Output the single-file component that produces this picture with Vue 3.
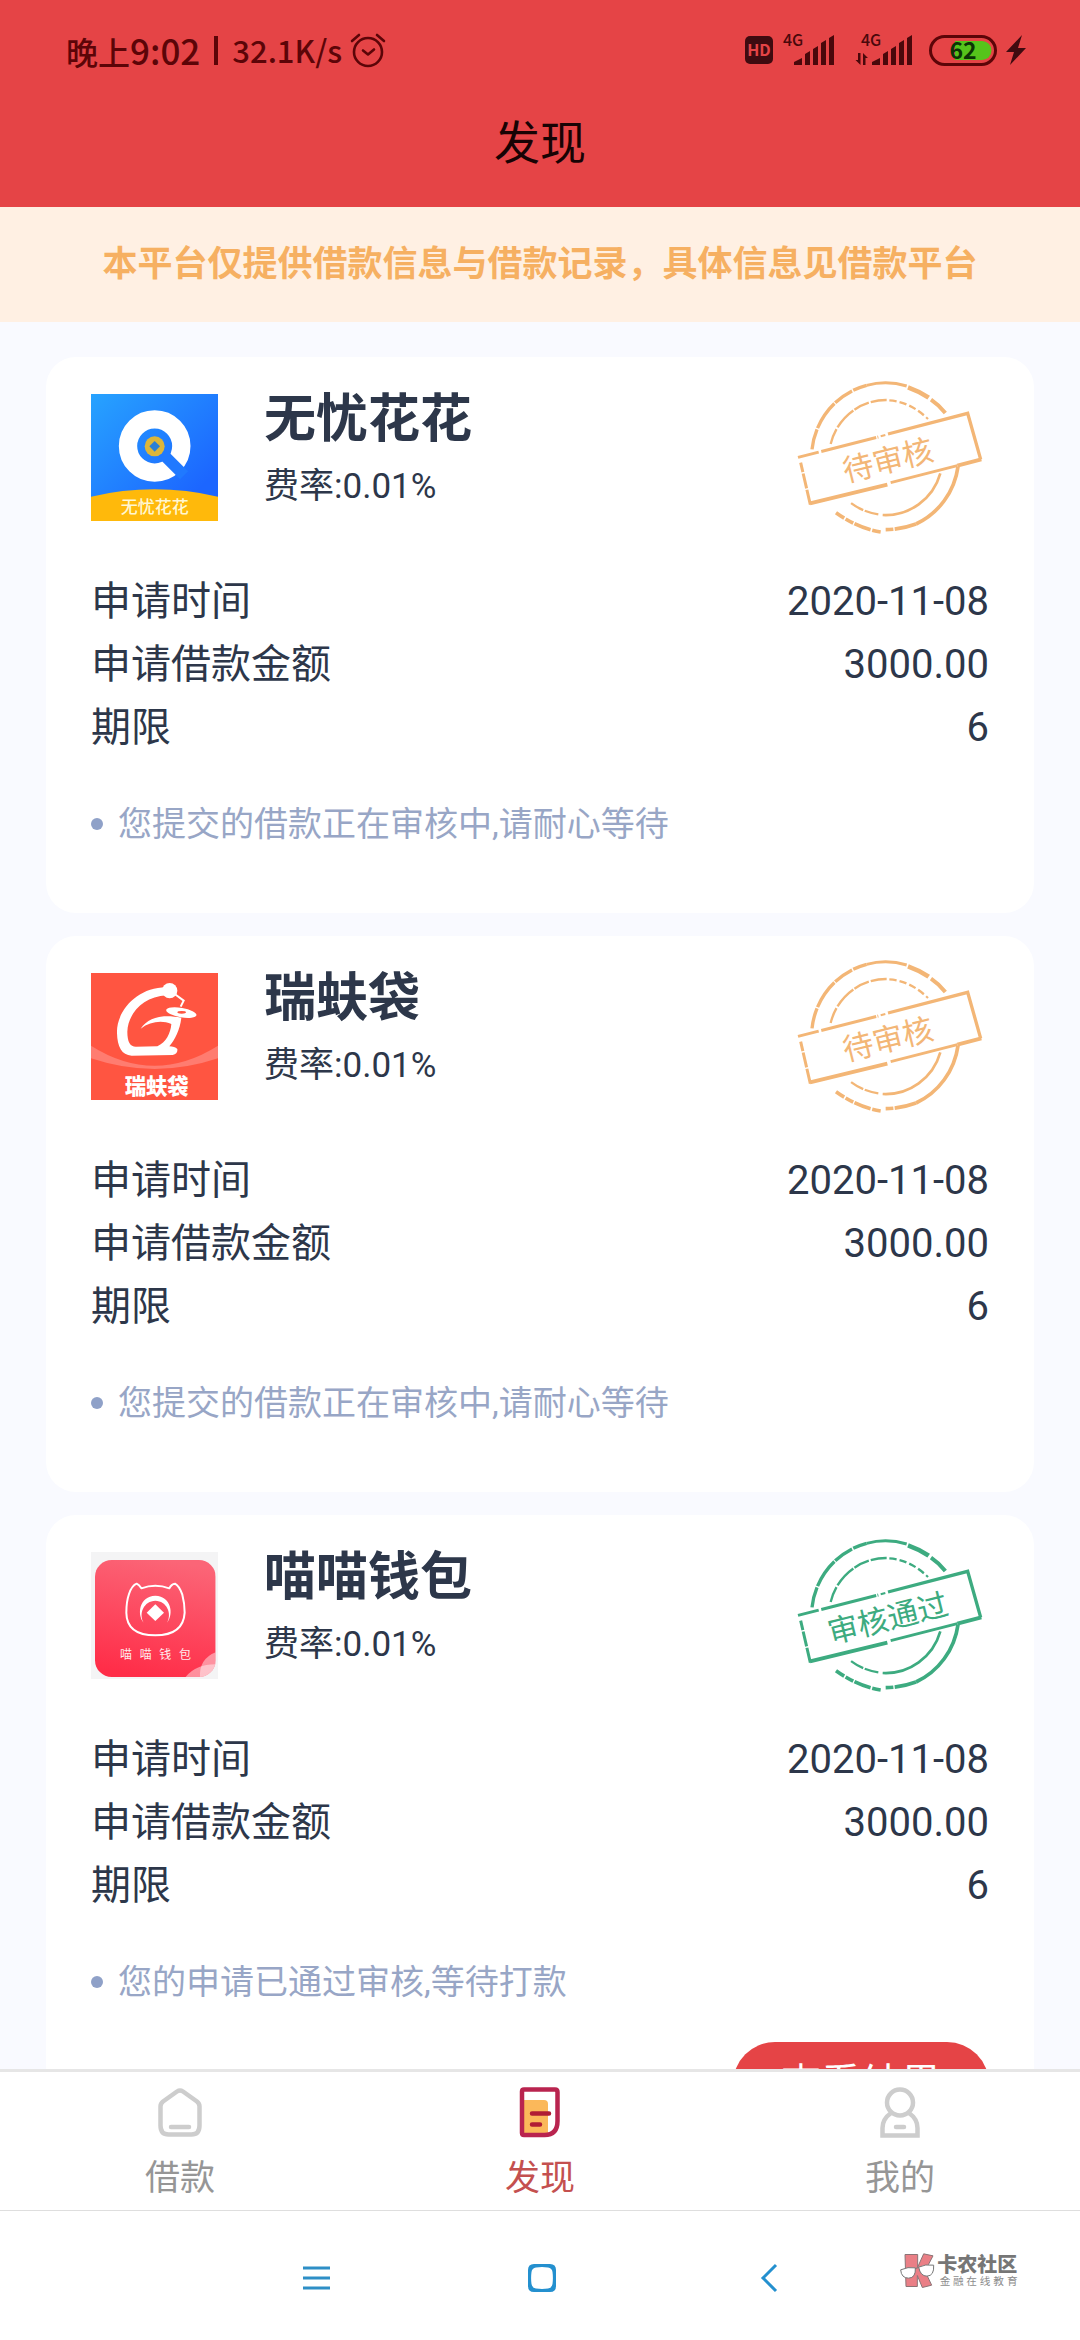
<template>
  <div class="page">
    <header class="header">
      <div class="status">
        <span class="clock">晚上<b>9:02</b></span>
        <span class="divider"></span>
        <span class="speed">32.1K/s</span>
        <svg class="alarm" width="36" height="36" viewBox="0 0 36 36" fill="none" stroke="#5c0508" stroke-width="2.6" stroke-linecap="round" stroke-linejoin="round">
          <circle cx="18" cy="20" r="14" />
          <path d="M13 18.5l5 4 6-5M2 9l7-6M34 9l-7-6" />
        </svg>
        <div class="status-right">
          <svg width="28" height="30" viewBox="0 0 28 30">
            <rect y="1" width="28" height="28" rx="5" fill="#3f0b10" />
            <text x="14" y="21" text-anchor="middle" font-size="16" font-weight="700" fill="#e54446">HD</text>
          </svg>
          <svg v-for="sim in sims" :key="sim.id" class="signal" width="58" height="32" viewBox="0 0 58 32" fill="#4a080b">
            <text x="6" y="12" font-size="16" font-weight="500">4G</text>
            <path d="M17 31v-3l8-4v7zM28 31V20l5-3v14zM36 31V15l5-3v19zM44 31V9l5-3v25zM52 31V4l5-3v30z" />
            <path v-if="sim.active" d="M3 19h2.500v12l-5-5h2.500zM8 31h2.500V24h2.500l-5-5z" />
          </svg>
          <svg class="battery" width="68" height="32" viewBox="0 0 68 32">
            <rect x="1.500" y="2.500" width="65" height="28" rx="14" fill="none" stroke="#5c0508" stroke-width="3" />
            <path d="M26 7h27a9.500 9.500 0 0 1 0 19H26z" fill="#56c41b" />
            <text x="34" y="25" text-anchor="middle" font-size="23" font-weight="600" fill="#0c3305">62</text>
          </svg>
          <svg class="bolt" width="20" height="32" viewBox="0 0 20 32">
            <path d="M16 1L0 18h8L4 31l16-17h-8z" fill="#3f0b10" />
          </svg>
        </div>
      </div>
      <h1 class="title">发现</h1>
    </header>

    <p class="notice">本平台仅提供借款信息与借款记录，具体信息见借款平台</p>

    <main class="list">
      <article v-for="item in loans" :key="item.name" class="card">
        <div class="card-head">
          <svg v-if="item.logo === 'wuyou'" class="logo" viewBox="153 132 381 381">
            <defs>
              <linearGradient id="blue" x1="0" y1="0" x2="1" y2="1">
                <stop offset="0" stop-color="#27a3ff" />
                <stop offset="0.8" stop-color="#1c66ff" />
              </linearGradient>
            </defs>
            <rect x="153" y="132" width="381" height="381" fill="url(#blue)" />
            <circle cx="344" cy="288" r="80" fill="none" stroke="#fff" stroke-width="55" />
            <path d="M366 310l66 66" stroke="#2079ff" stroke-width="34" />
            <circle cx="344" cy="289" r="30" fill="#dcb63a" />
            <path d="M344 273l16 16-16 16-16-16z" fill="#2a7fd8" />
            <path d="M153 440q190-44 381 0v73H153z" fill="#ffb90b" />
            <text x="344" y="489" text-anchor="middle" font-size="51" font-weight="500" fill="#fff7d2">无忧花花</text>
          </svg>
          <svg v-else-if="item.logo === 'ruifu'" class="logo" viewBox="153 69 381 381">
            <rect x="153" y="69" width="381" height="381" fill="#ff5541" />
            <path d="M153 287q190 120 381 0v38q-190 64-381 0z" fill="#ff7c70" />
            <g fill="#fff">
              <path d="M378 112C290 112 228 185 231 250C232 290 245 316 275 317L398 315Q414 312 412 297Q404 289 388 289C404 270 420 240 424 203C370 192 325 200 302 236C330 215 365 210 394 222C392 250 378 277 352 289L288 290C270 290 262 275 262 245C264 190 310 140 380 136Z" />
              <circle cx="389" cy="122" r="23" />
              <ellipse cx="424" cy="188" rx="46" ry="14" transform="rotate(10 424 188)" />
            </g>
            <path d="M404 132l27 20-9 18" fill="none" stroke="#fff" stroke-width="6" />
            <ellipse cx="425" cy="187" rx="13" ry="4" fill="#ff5541" />
            <text x="350" y="431" text-anchor="middle" font-size="64" font-weight="900" fill="#fff">瑞蚨袋</text>
          </svg>
          <svg v-else class="logo" viewBox="153 66 381 381">
            <defs>
              <linearGradient id="pink" x1="0.600" y1="0" x2="0.400" y2="1">
                <stop offset="0" stop-color="#fb6577" />
                <stop offset="1" stop-color="#ff2d48" />
              </linearGradient>
              <clipPath id="tile">
                <rect x="165" y="90" width="362" height="351" rx="50" />
              </clipPath>
            </defs>
            <rect x="153" y="66" width="381" height="381" fill="#f4f4f5" />
            <g clip-path="url(#tile)">
              <rect x="165" y="90" width="362" height="351" fill="url(#pink)" />
              <path d="M437 441q30-38 90-38v38z" fill="#fff" opacity="0.450" />
              <path d="M527 367q-50 20-47 74h47z" fill="#fff" opacity="0.450" />
            </g>
            <path d="M290 161Q297 164 304 175Q346 160 388 175Q394 162 405 161Q418 168 427 194Q434 220 434 248Q430 316 346 316Q260 316 259 248Q259 215 267 192Q276 166 290 161Z" fill="none" stroke="#fff" stroke-width="6" stroke-linejoin="round" />
            <path d="M311 278C290 252 298 199 346 197C394 199 402 252 381 278C397 250 380 213 346 212C312 213 295 250 311 278Z" fill="#fff" />
            <path d="M346 223l26 25-26 25-26-25z" fill="#fff" />
            <text x="240 299 358 417" y="387" font-size="36" fill="#ffe9ec">喵喵钱包</text>
          </svg>
          <div class="intro">
            <h2>{{ item.name }}</h2>
            <p>费率:{{ item.rate }}</p>
          </div>
        </div>

        <svg class="stamp" :class="item.state" viewBox="72 48 588 480">
          <g fill="none" stroke="currentColor">
            <path d="M126 268A221 224 0 0 1 290 76" stroke-width="10" stroke-dasharray="62 4 90 3" />
            <path d="M290 76A221 224 0 0 1 410 78" stroke-width="9" />
            <path d="M414 82Q448 94 476 113" stroke-width="14" />
            <path d="M483 119Q508 136 526 159" stroke-width="12" />
            <path d="M564 320A221 224 0 0 1 438 492" stroke-width="11" />
            <path d="M438 492Q395 508 347 509" stroke-width="11" stroke-dasharray="66 4" />
            <path d="M332 516Q265 506 198 458" stroke-width="11" stroke-dasharray="26 5 52 4" />
            <path d="M182 252A171 173 0 0 1 350 120" stroke-width="7" stroke-dasharray="48 6 70 4" />
            <path d="M358 121Q420 125 474 177" stroke-width="7" stroke-dasharray="22 9" />
            <path d="M511 340A171 173 0 0 1 338 465" stroke-width="8" />
            <path d="M325 463Q275 455 240 427" stroke-width="7" stroke-dasharray="42 5" />
            <path d="M84 292L325 231" stroke-width="9" stroke-dasharray="64 8 170 4" />
            <path d="M332 229l14-4" stroke-width="6" />
            <path d="M354 222L593 160L632 298" stroke-width="10" />
            <path d="M634 298L562 317" stroke-width="12" />
            <path d="M562 317L362 368" stroke-width="8" />
            <path d="M352 374L120 430" stroke-width="12" />
            <path d="M121 434L92 308" stroke-width="9" stroke-dasharray="46 4" />
          </g>
          <text x="354" y="334" text-anchor="middle" font-size="92" transform="rotate(-14 354 302)">{{ item.stamp }}</text>
        </svg>

        <dl class="details">
          <div v-for="row in item.rows" :key="row.label">
            <dt>{{ row.label }}</dt>
            <dd>{{ row.value }}</dd>
          </div>
        </dl>
        <p class="message">{{ item.message }}</p>
        <button v-if="item.action" type="button" class="action">{{ item.action }}</button>
      </article>
    </main>

    <nav class="tabs">
      <a href="#loan">
        <svg width="52" height="52" viewBox="0 0 52 52" fill="none" stroke="#cdcdcd" stroke-width="4.500" stroke-linecap="round" stroke-linejoin="round">
          <path d="M23 4.500q3-2 6 0l14 10q2.500 2 2.500 5v19q0 9-8 9h-23q-8 0-8-9v-19q0-3 2.500-5z" />
          <path d="M17 40h18" />
        </svg>
        <span>借款</span>
      </a>
      <a href="#discover" class="active">
        <svg width="52" height="52" viewBox="0 0 52 52" fill="none" stroke-linecap="round" stroke-linejoin="round">
          <path d="M9 13h21q4 0 4 4v31H9z" fill="#fbb85a" />
          <path d="M10 2.500h31q2.500 0 2.500 2.500v29q0 14-13 14H10q-2 0-2-2v-41.500q0-2 2-2z" stroke="#b9244f" stroke-width="4.500" />
          <path d="M18 26.500h17M18 37.500h8" stroke="#b01c34" stroke-width="4.500" />
        </svg>
        <span>发现</span>
      </a>
      <a href="#mine">
        <svg width="52" height="52" viewBox="0 0 52 52" fill="none" stroke="#cdcdcd" stroke-width="4.500" stroke-linecap="round">
          <circle cx="26" cy="15.500" r="13" />
          <path d="M17 26q-8.500 6-8.500 15v7.500h35V41q0-9-8.500-15" />
          <path d="M22 40h8" />
        </svg>
        <span>我的</span>
      </a>
    </nav>

    <footer class="system">
      <button type="button" aria-label="menu">
        <svg width="30" height="30" viewBox="0 0 30 30" stroke="#2e8fc6" stroke-width="3">
          <path d="M2 5h27M2 15h27M2 25h27" />
        </svg>
      </button>
      <button type="button" aria-label="home">
        <svg width="30" height="30" viewBox="0 0 30 30">
          <path fill-rule="evenodd" d="M7 1h16q6 0 6 6v16q0 6-6 6H7q-6 0-6-6V7q0-6 6-6zM9 4.500q-4 .5-4.500 4.500-.8 6 0 12 .5 4 4.500 4.500 6 .8 12 0 4-.5 4.500-4.500.8-6 0-12-.5-4-4.500-4.500-6-.8-12 0z" fill="#2490cf" />
        </svg>
      </button>
      <button type="button" aria-label="back">
        <svg width="30" height="30" viewBox="0 0 30 30" fill="none" stroke="#2490cf" stroke-width="3">
          <path d="M23 2L10 15l13 13" />
        </svg>
      </button>
      <svg class="community" viewBox="720 815 354 110">
        <g fill="#ea7f86" stroke="#8b7476" stroke-width="3">
          <path d="M735 822h38v38l18-40 28 6-24 46 20 42-28 7-15-36v33h-34z" />
        </g>
        <g fill="#fff" stroke="#777" stroke-width="3">
          <path d="M722 868q22-10 44-6 2 30-20 31-22 0-24-25z" />
          <path d="M776 860q20-10 45-6 2 32-20 33-20 0-25-27z" />
          <path d="M766 864l10-3" />
        </g>
        <text x="832" y="873" font-size="60" font-weight="900" fill="#767676">卡农社区</text>
        <text x="839 879 919 959 1000 1041" y="913" font-size="32" fill="#8d8d8d">金融在线教育</text>
      </svg>
    </footer>
  </div>
</template>

<script setup>
import { ref } from 'vue';

const sims = [
  { id: 1, active: false },
  { id: 2, active: true },
];

const rows = [
  { label: '申请时间', value: '2020-11-08' },
  { label: '申请借款金额', value: '3000.00' },
  { label: '期限', value: '6' },
];

const loans = ref([
  {
    name: '无忧花花',
    logo: 'wuyou',
    rate: '0.01%',
    state: 'pending',
    stamp: '待审核',
    rows,
    message: '您提交的借款正在审核中,请耐心等待',
  },
  {
    name: '瑞蚨袋',
    logo: 'ruifu',
    rate: '0.01%',
    state: 'pending',
    stamp: '待审核',
    rows,
    message: '您提交的借款正在审核中,请耐心等待',
  },
  {
    name: '喵喵钱包',
    logo: 'miaomiao',
    rate: '0.01%',
    state: 'passed',
    stamp: '审核通过',
    rows,
    message: '您的申请已通过审核,等待打款',
    action: '查看结果',
  },
]);
</script>

<style>
body {
  margin: 0;
}
</style>

<style scoped>
.page {
  display: flex;
  flex-direction: column;
  height: 100vh;
  background: #f9faff;
  color: #2d374a;
  font-family: Roboto, "Noto Sans CJK SC", sans-serif;
}

h1, h2, p, dl, dd {
  margin: 0;
}

svg {
  display: block;
  flex: none;
  overflow: visible;
}

.header {
  flex: none;
  padding-bottom: 21px;
  background: #e54446;
}

.status {
  display: flex;
  align-items: center;
  height: 100px;
  padding: 0 54px 0 66px;
  color: #5c0508;
  font-family: "Noto Sans CJK SC", sans-serif;
  font-weight: 500;
  line-height: 48px;
}

.clock {
  font-size: 32px;
}

.clock b {
  font-size: 35px;
  font-weight: 500;
}

.divider {
  width: 4px;
  height: 29px;
  margin: 0 14px;
  background: #5c0508;
}

.speed {
  font-size: 31px;
}

.alarm {
  margin-left: 8px;
}

.status-right {
  display: flex;
  align-items: center;
  margin-left: auto;
}

.signal {
  margin-left: 4px;
}

.signal + .signal {
  margin-left: 20px;
}

.battery {
  margin-left: 16px;
}

.bolt {
  margin-left: 9px;
}

.title {
  color: #180304;
  font-size: 46px;
  font-weight: 400;
  line-height: 86px;
  text-align: center;
}

.notice {
  flex: none;
  background: #fff0e3;
  color: #f6b062;
  font-size: 35px;
  font-weight: 700;
  line-height: 115px;
  text-align: center;
}

.list {
  display: flex;
  flex: 1;
  flex-direction: column;
  gap: 23px;
  min-height: 0;
  padding: 35px 46px;
  overflow-y: auto;
  scrollbar-width: none;
}

.card {
  position: relative;
  flex: none;
  padding: 37px 45px 63px;
  border-radius: 30px;
  background: #fff;
}

.card-head {
  display: flex;
  gap: 46px;
}

.logo {
  width: 127px;
  height: 127px;
}

.intro h2 {
  font-size: 52px;
  font-weight: 700;
  line-height: 52px;
}

.intro p {
  margin-top: 15px;
  font-size: 35px;
  line-height: 52px;
}

.stamp {
  position: absolute;
  top: 19px;
  right: 44px;
  width: 196px;
  height: 160px;
  font-weight: 400;
}

.stamp text {
  fill: currentColor;
}

.pending {
  color: #f3b676;
}

.passed {
  color: #3dab80;
}

.details {
  margin-top: 49px;
  font-size: 40px;
  line-height: 63px;
}

.details div {
  display: flex;
  justify-content: space-between;
}

.message {
  display: flex;
  align-items: center;
  gap: 15px;
  margin-top: 39px;
  color: #98a6c6;
  font-size: 34px;
  line-height: 52px;
}

.message::before {
  width: 12px;
  height: 12px;
  border-radius: 50%;
  background: #8fa1c8;
  content: "";
}

.action {
  display: block;
  width: 256px;
  height: 84px;
  margin: 34px 0 0 auto;
  padding: 0;
  border: 0;
  border-radius: 42px;
  background: #e54446;
  color: #fff;
  font: inherit;
  font-size: 40px;
  line-height: 84px;
}

.tabs {
  display: grid;
  flex: none;
  grid-template-columns: repeat(3, 1fr);
  border-top: 3px solid #e6e6e6;
  border-bottom: 1px solid #dedede;
  background: #fff;
}

.tabs a {
  display: flex;
  flex-direction: column;
  align-items: center;
  padding: 15px 0 5px;
  color: #969696;
  font-size: 35px;
  line-height: 52px;
  text-decoration: none;
}

.tabs span {
  margin-top: 14px;
}

.tabs .active {
  color: #c4504f;
}

.system {
  position: relative;
  display: flex;
  flex: none;
  align-items: center;
  justify-content: center;
  gap: 196px;
  box-sizing: border-box;
  height: 129px;
  padding: 4px 0 0 3px;
  background: #fff;
}

.system button {
  padding: 0;
  border: 0;
  background: none;
}

.community {
  position: absolute;
  top: 41px;
  right: 62px;
  width: 118px;
  height: 37px;
}
</style>
